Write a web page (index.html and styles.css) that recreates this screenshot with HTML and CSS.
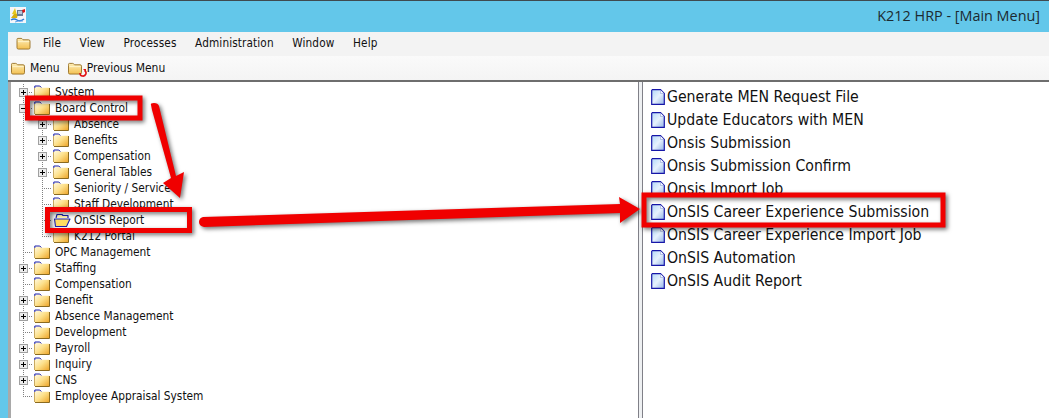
FILE: index.html
```html
<!DOCTYPE html>
<html lang="en">
<head>
<meta charset="utf-8">
<title>K212 HRP - [Main Menu]</title>
<link rel="stylesheet" href="styles.css">
</head>
<body>
<svg class="defs" width="0" height="0" aria-hidden="true">
  <defs>
    <linearGradient id="fg" x1="0" y1="0" x2="1" y2="1">
      <stop offset="0" stop-color="#fffbe6"/><stop offset=".5" stop-color="#fde08a"/><stop offset="1" stop-color="#eda52a"/>
    </linearGradient>
    <linearGradient id="tg" x1="0" y1="0" x2="0" y2="1">
      <stop offset="0" stop-color="#fdeeb8"/><stop offset="1" stop-color="#f3c050"/>
    </linearGradient>
    <linearGradient id="dg" x1="0" y1="0" x2="1" y2="1">
      <stop offset="0" stop-color="#b4d8f8"/><stop offset=".5" stop-color="#e6f1fd"/><stop offset="1" stop-color="#98b6e8"/>
    </linearGradient>
    <symbol id="folder" viewBox="0 0 16 14">
      <path d="M1 2.500V1.200h5l1.500 1.600h7.600v10.400H1z" fill="url(#fg)"/>
      <path d="M.8 3V1h5l1.500 1.500" fill="none" stroke="#1a20b0" stroke-width="1"/>
      <path d="M15.500 3v10.500H1" fill="none" stroke="#8a6a20" stroke-width="1"/>
      <path d="M.5 3v10" stroke="#c8a860" stroke-width="1"/>
    </symbol>
    <symbol id="folder-open" viewBox="0 0 18 16">
      <path d="M3 6 4 2.500h5l1 1h5V6" fill="#fff3b0" stroke="#1a20b0" stroke-width="1.200" stroke-linejoin="round"/>
      <path d="M1.500 7H17l-3.500 7.500H2.500z" fill="#ffdc60" stroke="#1a20b0" stroke-width="1.100" stroke-linejoin="round"/>
    </symbol>
    <symbol id="tfolder" viewBox="0 0 16 14">
      <path d="M1 4V2.600Q1 1.500 2 1.500h3.500Q6.500 1.500 7 2.500L7.500 3h6Q15 3 15 4.500v7Q15 13 13.500 13h-11Q1 13 1 11.500z" fill="url(#tg)" stroke="#9a7428" stroke-width="1"/>
      <path d="M2 5h12" stroke="#fff6d0" stroke-width="1"/>
    </symbol>
    <symbol id="doc" viewBox="0 0 14 16">
      <path d="M1 1h8.500L13 4.500V15H1z" fill="url(#dg)"/>
      <path d="M.7 1v14.300H13.300V4.500L9.500.7H.7" fill="none" stroke="#1616a8" stroke-width="1.200"/>
      <path d="M9.500 1v3.500H13" fill="#f4f8ff" stroke="#8f9fd8" stroke-width=".6"/>
    </symbol>
  </defs>
</svg>

<div class="window">
  <header class="titlebar">
    <svg class="appicon" viewBox="0 0 16 16" aria-hidden="true">
      <rect width="16" height="16" fill="#f4f6fa"/>
      <path d="M2 7 5 1l2 7z" fill="#e8c820"/>
      <path d="M1 11l3-4h4l-1 4z" fill="#d8b010"/>
      <rect x="7" y="3" width="6" height="6" fill="#6a7c96"/>
      <rect x="8" y="4" width="4" height="3" fill="#b8c8dc"/>
      <path d="M12 3l3-1v3l-2 1z" fill="#d81818"/>
      <path d="M1 13q3-2 6 0t7-1" fill="none" stroke="#2a7ad8" stroke-width="1.500"/>
      <path d="M5 15q3-1.500 8-1" fill="none" stroke="#5aa0e8" stroke-width="1"/>
    </svg>
    <span class="title">K212 HRP - [Main Menu]</span>
  </header>

  <div class="body">
    <nav class="menubar">
      <svg class="menuicon"><use href="#tfolder"/></svg>
      <span class="m">File</span>
      <span class="m">View</span>
      <span class="m">Processes</span>
      <span class="m">Administration</span>
      <span class="m">Window</span>
      <span class="m">Help</span>
    </nav>
    <div class="toolbar">
      <span class="tool"><svg class="toolicon"><use href="#tfolder"/></svg>Menu</span>
      <span class="tool tool-prev">
        <span class="prevwrap"><svg class="toolicon"><use href="#tfolder"/></svg>
        <svg class="badge" viewBox="0 0 9 9"><path d="M6.500 1.500A3 3 0 1 1 2 4" fill="none" stroke="#e01010" stroke-width="1.600"/><path d="M5 0h3v3z" fill="#e01010"/></svg></span>Previous Menu
      </span>
    </div>

    <main class="panes">
      <section class="tree">
        <div class="row"><span class="cell t"><i class="exp plus"></i></span><svg class="fld"><use href="#folder"/></svg><span>System</span></div>
        <div class="row"><span class="cell t"><i class="exp"></i></span><svg class="fld"><use href="#folder"/></svg><span>Board Control</span></div>
        <div class="row"><span class="cell v"></span><span class="cell t"><i class="exp plus"></i></span><svg class="fld"><use href="#folder"/></svg><span>Absence</span></div>
        <div class="row"><span class="cell v"></span><span class="cell t"><i class="exp plus"></i></span><svg class="fld"><use href="#folder"/></svg><span>Benefits</span></div>
        <div class="row"><span class="cell v"></span><span class="cell t"><i class="exp plus"></i></span><svg class="fld"><use href="#folder"/></svg><span>Compensation</span></div>
        <div class="row"><span class="cell v"></span><span class="cell t"><i class="exp plus"></i></span><svg class="fld"><use href="#folder"/></svg><span>General Tables</span></div>
        <div class="row"><span class="cell v"></span><span class="cell t"></span><svg class="fld"><use href="#folder"/></svg><span>Seniority / Service</span></div>
        <div class="row"><span class="cell v"></span><span class="cell t"></span><svg class="fld"><use href="#folder"/></svg><span>Staff Development</span></div>
        <div class="row"><span class="cell v"></span><span class="cell t"></span><svg class="fld fld-open"><use href="#folder-open"/></svg><span>OnSIS Report</span></div>
        <div class="row"><span class="cell v"></span><span class="cell l"></span><svg class="fld"><use href="#folder"/></svg><span>K212 Portal</span></div>
        <div class="row"><span class="cell t"></span><svg class="fld"><use href="#folder"/></svg><span>OPC Management</span></div>
        <div class="row"><span class="cell t"><i class="exp plus"></i></span><svg class="fld"><use href="#folder"/></svg><span>Staffing</span></div>
        <div class="row"><span class="cell t"></span><svg class="fld"><use href="#folder"/></svg><span>Compensation</span></div>
        <div class="row"><span class="cell t"><i class="exp plus"></i></span><svg class="fld"><use href="#folder"/></svg><span>Benefit</span></div>
        <div class="row"><span class="cell t"><i class="exp plus"></i></span><svg class="fld"><use href="#folder"/></svg><span>Absence Management</span></div>
        <div class="row"><span class="cell t"></span><svg class="fld"><use href="#folder"/></svg><span>Development</span></div>
        <div class="row"><span class="cell t"><i class="exp plus"></i></span><svg class="fld"><use href="#folder"/></svg><span>Payroll</span></div>
        <div class="row"><span class="cell t"><i class="exp plus"></i></span><svg class="fld"><use href="#folder"/></svg><span>Inquiry</span></div>
        <div class="row"><span class="cell t"><i class="exp plus"></i></span><svg class="fld"><use href="#folder"/></svg><span>CNS</span></div>
        <div class="row"><span class="cell l"></span><svg class="fld"><use href="#folder"/></svg><span>Employee Appraisal System</span></div>
      </section>
      <div class="splitter"></div>
      <section class="list">
        <div class="item"><svg class="doc"><use href="#doc"/></svg>Generate MEN Request File</div>
        <div class="item"><svg class="doc"><use href="#doc"/></svg>Update Educators with MEN</div>
        <div class="item"><svg class="doc"><use href="#doc"/></svg>Onsis Submission</div>
        <div class="item"><svg class="doc"><use href="#doc"/></svg>Onsis Submission Confirm</div>
        <div class="item"><svg class="doc"><use href="#doc"/></svg>Onsis Import Job</div>
        <div class="item"><svg class="doc"><use href="#doc"/></svg>OnSIS Career Experience Submission</div>
        <div class="item"><svg class="doc"><use href="#doc"/></svg>OnSIS Career Experience Import Job</div>
        <div class="item"><svg class="doc"><use href="#doc"/></svg>OnSIS Automation</div>
        <div class="item"><svg class="doc"><use href="#doc"/></svg>OnSIS Audit Report</div>
      </section>
    </main>
  </div>
</div>

<svg class="marks" viewBox="0 0 1049 418" aria-hidden="true">
  <g class="markgroup">
    <rect x="27.500" y="98" width="112.500" height="20" class="box"/>
    <rect x="47.500" y="209.500" width="142" height="21" class="box"/>
    <rect x="644" y="195" width="299" height="30" class="box"/>
    <path d="M151 105 Q150 103 154 103 Q158 103 159 106 L176 176 L184 172 L180 198 L163 183 L171 178 L152 110 Z" class="arrow"/>
    <path d="M203 217 L620 204 L619 197 L640 209 L620 223 L620 213 L204 227 Q199 226 199 222 Q199 218 203 217 Z" class="arrow"/>
  </g>
</svg>
</body>
</html>
```
FILE: styles.css
```css
* { box-sizing: border-box; }
html, body { margin: 0; padding: 0; }
body {
  width: 1049px;
  height: 418px;
  overflow: hidden;
  position: relative;
  background: #fff;
  font-family: "DejaVu Sans Condensed", "DejaVu Sans", sans-serif;
  color: #111;
}
.defs { position: absolute; }
.window {
  height: 418px;
  display: flex;
  flex-direction: column;
  background: #63c7ea;
  border-top: 1px solid #3f4a50;
}
.titlebar {
  height: 31px;
  flex: none;
  display: flex;
  align-items: center;
  justify-content: space-between;
  padding: 0 9px 3px 10px;
}
.appicon { width: 16px; height: 16px; }
.title { font-family: "Open Sans", sans-serif; font-size: 14.400px; color: #1c2a30; }
.body {
  flex: 1;
  display: flex;
  flex-direction: column;
  margin-left: 8px;
  min-height: 0;
}
.menubar {
  height: 24px;
  flex: none;
  display: flex;
  align-items: center;
  padding: 0 0 2px 8px;
  background: #f3f3f3;
  font-size: 11.700px;
  letter-spacing: .12px;
}
.menuicon { width: 15px; height: 13px; margin-right: 12px; }
.m { margin-right: 18.600px; }
.toolbar {
  height: 26px;
  flex: none;
  display: flex;
  align-items: center;
  gap: 7px;
  padding-left: 2px;
  background: linear-gradient(#fafafa, #f4f4f4);
  border-bottom: 2px solid #6e6e6e;
  font-size: 12px;
}
.tool { display: flex; align-items: center; gap: 4px; }
.toolicon { width: 16px; height: 13px; display: block; }
.prevwrap { position: relative; display: block; }
.badge { position: absolute; right: -4px; bottom: -3px; width: 9px; height: 9px; }
.panes { flex: 1; display: flex; min-height: 0; background: #fff; }
.tree {
  width: 630px;
  flex: none;
  padding: 2px 0 0 3px;
  border-left: 3px solid #a9a9a9;
  font-size: 11.800px;
  overflow: hidden;
}
.row { height: 16px; display: flex; align-items: center; white-space: nowrap; }
.cell {
  width: 19px;
  height: 16px;
  flex: none;
  display: flex;
  align-items: center;
  justify-content: center;
  background-repeat: no-repeat;
}
.cell.v {
  background-image: repeating-linear-gradient(to bottom, #808080 0 1px, transparent 1px 2px);
  background-position: 9px 0;
  background-size: 1px 16px;
}
.cell.t {
  background-image:
    repeating-linear-gradient(to right, #808080 0 1px, transparent 1px 2px),
    repeating-linear-gradient(to bottom, #808080 0 1px, transparent 1px 2px);
  background-position: 9px 8px, 9px 0;
  background-size: 10px 1px, 1px 16px;
}
.cell.l {
  background-image:
    repeating-linear-gradient(to right, #808080 0 1px, transparent 1px 2px),
    repeating-linear-gradient(to bottom, #808080 0 1px, transparent 1px 2px);
  background-position: 9px 8px, 9px 0;
  background-size: 10px 1px, 1px 9px;
}
.exp {
  width: 9px;
  height: 9px;
  display: block;
  border: 1px solid #a0a0a0;
  background-color: #ececec;
  background-image: linear-gradient(#000, #000);
  background-repeat: no-repeat;
  background-position: 1px 3px;
  background-size: 5px 1px;
}
.exp.plus {
  background-image: linear-gradient(#000, #000), linear-gradient(#000, #000);
  background-position: 1px 3px, 3px 1px;
  background-size: 5px 1px, 1px 5px;
}
.fld { width: 16px; height: 14px; margin-left: 1px; margin-right: 5px; flex: none; }
.fld-open { width: 18px; height: 16px; margin-right: 3px; }
.splitter {
  width: 5px;
  flex: none;
  background: #eef0f2;
  border-left: 1px solid #808088;
  border-right: 1px solid #808088;
}
.list {
  flex: 1;
  padding: 3px 0 0 8px;
  font-size: 15.700px;
}
.item { height: 23px; display: flex; align-items: center; gap: 2px; white-space: nowrap; }
.doc { width: 14px; height: 16px; flex: none; }
.marks {
  position: absolute;
  left: 0;
  top: 0;
  width: 1049px;
  height: 418px;
  pointer-events: none;
}
.markgroup { filter: drop-shadow(2px 2px 2px rgba(0,0,0,.55)); }
.box { fill: none; stroke: #f00000; stroke-width: 5; }
.arrow { fill: #f00000; }
```
